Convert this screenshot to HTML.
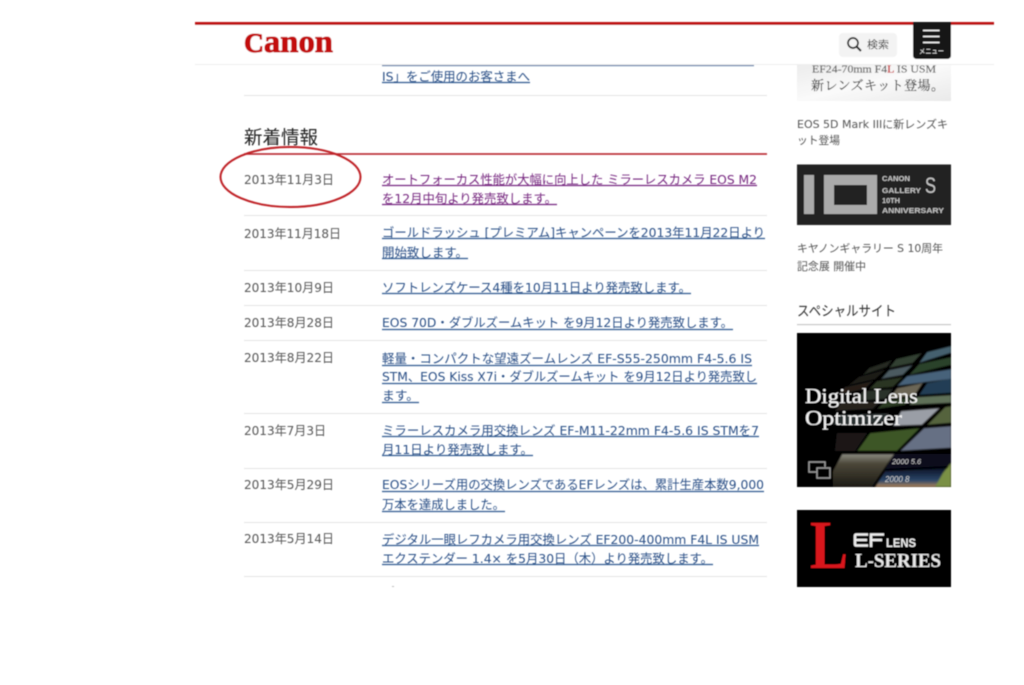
<!DOCTYPE html>
<html lang="ja"><head><meta charset="utf-8"><title>Canon</title>
<style>
html,body{margin:0;padding:0;background:#fff;width:1024px;height:685px;overflow:hidden}
svg{display:block;position:absolute;left:0;top:0}
text{font-family:"Liberation Sans","Noto Sans CJK JP",sans-serif}
.d,.l,.v,.s{font-family:"DejaVu Sans","Noto Sans CJK JP",sans-serif}
.d{font-size:12.5px;fill:#555}
.l{font-size:12.5px;fill:#2b4f86}
.v{font-size:12.5px;fill:#76287f}
.s{font-size:11px;fill:#555}
.sf{font-family:"Liberation Serif","Noto Serif CJK JP","Noto Serif CJK SC",serif}
</style></head><body>
<svg width="1024" height="685" viewBox="0 0 1024 685" xmlns="http://www.w3.org/2000/svg">
<defs>
<filter id="b" x="-2%" y="-2%" width="104%" height="104%"><feGaussianBlur stdDeviation="0.42"/></filter>
<filter id="b2" x="-5%" y="-5%" width="110%" height="110%"><feGaussianBlur stdDeviation="0.9"/></filter>
<linearGradient id="ban" x1="0" y1="0" x2="1" y2="1"><stop offset="0" stop-color="#ececec"/><stop offset=".5" stop-color="#fafafa"/><stop offset="1" stop-color="#e9e9e9"/></linearGradient>
<linearGradient id="dusk" x1="0" y1="0" x2="0" y2="1"><stop offset="0" stop-color="#0a1226"/><stop offset=".65" stop-color="#2c4668"/><stop offset="1" stop-color="#b08458"/></linearGradient>
<linearGradient id="tile" x1="0" y1="0" x2="0" y2="1"><stop offset="0" stop-color="#8a8a80"/><stop offset=".3" stop-color="#4a4638"/><stop offset="1" stop-color="#1c1a14"/></linearGradient>
<clipPath id="cp"><rect x="0" y="0" width="154" height="154"/></clipPath>
</defs>
<g filter="url(#b)">
<!-- main list -->
<g fill="none" stroke-width="1.2">
<path d="M382 65.500H754" stroke="#5a7aa5"/>
<path d="M382 82.500H530" stroke="#2f5a90"/>
<path d="M382 185.500H757M382 204.500H557" stroke="#76287f"/>
<path d="M382 238.500H765M382 258.500H468M382 293.500H691M382 329.500H733M382 365.500H752M382 383.500H757M382 402.500H419M382 436.500H759M382 455.500H533M382 491.500H764M382 511.500H505M382 545.500H759M382 564.500H713" stroke="#2f5a90"/>
<path d="M244 95.500H767M244 215.500H767M244 270.500H767M244 305.500H767M244 340.500H767M244 413.500H767M244 468.500H767M244 522.500H767M244 576.500H767" stroke="#e4e4e4" stroke-width="1"/>
<path d="M244 154H767" stroke="#b51a20" stroke-width="1.4"/>
</g>
<text class="l" x="382" y="81" textLength="148" lengthAdjust="spacingAndGlyphs">IS」をご使用のお客さまへ</text>
<text x="244" y="144" font-size="18.500" fill="#222" textLength="74" lengthAdjust="spacingAndGlyphs">新着情報</text>

<text class="d" x="244" y="184" textLength="90" lengthAdjust="spacingAndGlyphs">2013年11月3日</text>
<text class="v" x="382" y="184" textLength="375" lengthAdjust="spacingAndGlyphs">オートフォーカス性能が大幅に向上した ミラーレスカメラ EOS M2</text>
<text class="v" x="382" y="203" textLength="175" lengthAdjust="spacingAndGlyphs">を12月中旬より発売致します。</text>

<text class="d" x="244" y="238" textLength="97" lengthAdjust="spacingAndGlyphs">2013年11月18日</text>
<text class="l" x="382" y="237" textLength="383" lengthAdjust="spacingAndGlyphs">ゴールドラッシュ [プレミアム]キャンペーンを2013年11月22日より</text>
<text class="l" x="382" y="257" textLength="86" lengthAdjust="spacingAndGlyphs">開始致します。</text>

<text class="d" x="244" y="292" textLength="90" lengthAdjust="spacingAndGlyphs">2013年10月9日</text>
<text class="l" x="382" y="292" textLength="309" lengthAdjust="spacingAndGlyphs">ソフトレンズケース4種を10月11日より発売致します。</text>

<text class="d" x="244" y="327" textLength="90" lengthAdjust="spacingAndGlyphs">2013年8月28日</text>
<text class="l" x="382" y="327" textLength="351" lengthAdjust="spacingAndGlyphs">EOS 70D・ダブルズームキット を9月12日より発売致します。</text>

<text class="d" x="244" y="362" textLength="90" lengthAdjust="spacingAndGlyphs">2013年8月22日</text>
<text class="l" x="382" y="363" textLength="370" lengthAdjust="spacingAndGlyphs">軽量・コンパクトな望遠ズームレンズ EF-S55-250mm F4-5.6 IS</text>
<text class="l" x="382" y="381" textLength="375" lengthAdjust="spacingAndGlyphs">STM、EOS Kiss X7i・ダブルズームキット を9月12日より発売致し</text>
<text class="l" x="382" y="400" textLength="37" lengthAdjust="spacingAndGlyphs">ます。</text>

<text class="d" x="244" y="435" textLength="82" lengthAdjust="spacingAndGlyphs">2013年7月3日</text>
<text class="l" x="382" y="435" textLength="377" lengthAdjust="spacingAndGlyphs">ミラーレスカメラ用交換レンズ EF-M11-22mm F4-5.6 IS STMを7</text>
<text class="l" x="382" y="454" textLength="151" lengthAdjust="spacingAndGlyphs">月11日より発売致します。</text>

<text class="d" x="244" y="489" textLength="90" lengthAdjust="spacingAndGlyphs">2013年5月29日</text>
<text class="l" x="382" y="489" textLength="382" lengthAdjust="spacingAndGlyphs">EOSシリーズ用の交換レンズであるEFレンズは、累計生産本数9,000</text>
<text class="l" x="382" y="509" textLength="123" lengthAdjust="spacingAndGlyphs">万本を達成しました。</text>

<text class="d" x="244" y="543" textLength="90" lengthAdjust="spacingAndGlyphs">2013年5月14日</text>
<text class="l" x="382" y="544" textLength="377" lengthAdjust="spacingAndGlyphs">デジタル一眼レフカメラ用交換レンズ EF200-400mm F4L IS USM</text>
<text class="l" x="382" y="563" textLength="331" lengthAdjust="spacingAndGlyphs">エクステンダー 1.4× を5月30日（木）より発売致します。</text>
<rect x="392" y="586" width="2" height="1" fill="#bbb"/>

<!-- circle annotation -->
<ellipse cx="290.500" cy="177" rx="70" ry="30" fill="none" stroke="#bf2026" stroke-width="2"/>

<!-- sidebar banner 1 -->
<rect x="797" y="64" width="154" height="37" fill="url(#ban)"/>
<text class="sf" x="812" y="72.500" font-size="10.500" fill="#666" stroke="#666" stroke-width=".2" textLength="124" lengthAdjust="spacingAndGlyphs">EF24-70mm F4<tspan fill="#c3282d" stroke="#c3282d">L</tspan> IS USM</text>
<text class="sf" x="811" y="90" font-size="13" fill="#444" stroke="#444" stroke-width=".2" textLength="133" lengthAdjust="spacing">新レンズキット登場。</text>
<text class="s" x="797" y="128" textLength="151" lengthAdjust="spacingAndGlyphs">EOS 5D Mark IIIに新レンズキ</text>
<text class="s" x="797" y="144" textLength="43" lengthAdjust="spacingAndGlyphs">ット登場</text>

<!-- gallery banner -->
<rect x="797" y="164.500" width="154" height="60.500" fill="#222"/>
<rect x="804" y="175" width="10" height="39" fill="#aaa"/>
<path fill-rule="evenodd" d="M824 175H877V214H824ZM834 185V205H867V185Z" fill="#aaa"/>
<g fill="#c4c4c4" font-size="7" font-weight="bold">
<text x="882" y="181" textLength="28" lengthAdjust="spacingAndGlyphs">CANON</text>
<text x="882" y="193" textLength="39" lengthAdjust="spacingAndGlyphs">GALLERY</text>
<text x="882" y="203" textLength="18" lengthAdjust="spacingAndGlyphs">10TH</text>
<text x="882" y="213" textLength="62" lengthAdjust="spacingAndGlyphs">ANNIVERSARY</text>
</g>
<text x="925" y="193" font-size="22" fill="#c4c4c4" textLength="11" lengthAdjust="spacingAndGlyphs">S</text>
<text class="s" x="797" y="252" textLength="146" lengthAdjust="spacingAndGlyphs">キヤノンギャラリー S 10周年</text>
<text class="s" x="797" y="270" textLength="69" lengthAdjust="spacingAndGlyphs">記念展 開催中</text>

<text x="797" y="316" font-size="14" fill="#333" textLength="99" lengthAdjust="spacingAndGlyphs">スペシャルサイト</text>
<rect x="797" y="324" width="154" height="1.200" fill="#c8c8c8"/>

<!-- Digital Lens Optimizer -->
<g transform="translate(797 333)">
<rect width="154" height="154" fill="#000"/>
<g clip-path="url(#cp)">
<g filter="url(#b2)">
<polygon points="72,35 95,27 90,34 66,42" fill="#262a24"/>
<polygon points="99,26 125,20 116,30 92,35" fill="#333f33"/>
<polygon points="130,19 154,13 154,20 122,30" fill="#44606e"/>
<polygon points="62,44 88,37 78,46 52,52" fill="#1e1a18"/>
<polygon points="92,37 116,32 106,42 84,46" fill="#4c5a60"/>
<polygon points="122,31 154,24 154,32 112,42" fill="#2c4229"/>
<polygon points="48,54 76,48 68,56 40,62" fill="#261c18"/>
<polygon points="80,48 106,44 96,54 72,56" fill="#2a3624"/>
<polygon points="110,43 154,36 154,46 100,53" fill="#46627a"/>
<polygon points="66,58 96,56 88,66 58,68" fill="#2c302a"/>
<polygon points="100,55 126,50 118,62 92,66" fill="#6c6656"/>
<polygon points="130,50 154,46 154,60 122,62" fill="#243e54"/>
<polygon points="44,70 84,68 76,76 38,78" fill="#26221a"/>
<polygon points="88,68 116,64 108,72 80,76" fill="#2c3a22"/>
<polygon points="120,64 154,62 154,70 112,72" fill="#5e7058"/>
<polygon points="40,82 92,80 84,90 36,92" fill="#2c3030"/>
<polygon points="104,78 143,75 125,92 96,93" fill="#9a9ea6"/>
<polygon points="148,74 154,73 154,90 130,92" fill="#54643e"/>
<polygon points="40,100 70,100 58,118 38,118" fill="#1a1414"/>
<polygon points="73,100 123,95 100,118 60,118" fill="#3e5628"/>
<polygon points="127,95 154,93 154,115 103,118" fill="#667084"/>
<polygon points="45,121 97,121 75,154 27,154" fill="url(#tile)"/>
<polygon points="97,121 154,121 154,133 88,136" fill="#070c1a"/>
<polygon points="88,138 154,135 154,141 141,154 78,154" fill="url(#dusk)"/>
<polygon points="146,140 154,130 154,154 138,154" fill="#7a9044"/>
</g>
<rect x="0" y="0" width="36" height="154" fill="#000"/>
<text x="95" y="131" font-size="7.500" fill="#ccc" font-style="italic">2000 5.6</text>
<text x="88" y="149" font-size="8" fill="#ccc" font-style="italic">2000 8</text>
<text class="sf" x="8" y="70" font-size="21" fill="#f2f2f2" stroke="#f2f2f2" stroke-width=".25" textLength="113" lengthAdjust="spacingAndGlyphs">Digital  Lens</text>
<text class="sf" x="8" y="92" font-size="21" fill="#f2f2f2" stroke="#f2f2f2" stroke-width=".25" textLength="97" lengthAdjust="spacingAndGlyphs">Optimizer</text>
<g fill="none" stroke="#9a9a9a" stroke-width="1.500">
<path d="M20 139H12V129H28V134"/>
<path d="M22 135H33V145H20V135Z"/>
</g>
</g>
</g>

<!-- L series -->
<rect x="797" y="510" width="154" height="77" fill="#000"/>
<text class="sf" x="810" y="568" font-size="69" font-weight="bold" fill="#d8141c" textLength="38" lengthAdjust="spacingAndGlyphs">L</text>
<g fill="none" stroke="#eee" stroke-width="2.600">
<path d="M868 534.500H856.500Q855 534.500 855 536V544Q855 545.500 856.500 545.500H868M856 540H867"/>
<path d="M871 547V534.500H884M871 540H882"/>
</g>
<text x="886" y="547" font-size="12" font-weight="bold" fill="#eee" textLength="30" lengthAdjust="spacingAndGlyphs">LENS</text>
<text class="sf" x="855" y="567" font-size="20" font-weight="bold" fill="#e8e8e8" textLength="86" lengthAdjust="spacingAndGlyphs">L-SERIES</text>

<!-- header -->
<rect x="195" y="25" width="799" height="39" fill="#fff"/>
<rect x="195" y="64" width="799" height="1" fill="#eeeeee"/>
<rect x="195" y="22" width="799" height="3" fill="#bf1418"/>
<text class="sf" x="244" y="52" font-weight="bold" fill="#c3100f" stroke="#c3100f" stroke-width="1" textLength="89" lengthAdjust="spacingAndGlyphs"><tspan font-size="27">C</tspan><tspan font-size="32">anon</tspan></text>
<rect x="839" y="33" width="58" height="24" rx="4" fill="#f3f3f3"/>
<circle cx="853" cy="43" r="5" fill="none" stroke="#222" stroke-width="1.700"/>
<path d="M856.500 46.500L861 51" stroke="#222" stroke-width="2"/>
<text x="867" y="48" font-size="10.500" fill="#333" textLength="22" lengthAdjust="spacingAndGlyphs">検索</text>
<path d="M913 22H951V55Q951 59 947 59H917Q913 59 913 55Z" fill="#181818"/>
<path d="M923 30.500H939.500M923 36.500H939.500M923 42.500H939.500" stroke="#fff" stroke-width="1.500"/>
<text x="919" y="53.500" font-size="7" fill="#eee" textLength="25" lengthAdjust="spacingAndGlyphs">メニュー</text>
</g>
</svg>
</body></html>
